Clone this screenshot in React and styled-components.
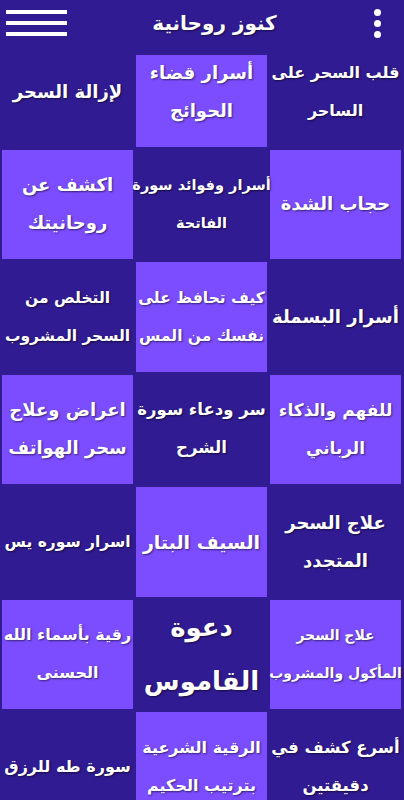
import { useLayoutEffect, useRef } from "react";
import styled, { createGlobalStyle } from "styled-components";

const items = [
  { lines: ["قلب السحر على", "الساحر"], size: 16 },
  { lines: ["أسرار قضاء", "الحوائج"] },
  { lines: ["لإزالة السحر"] },
  { lines: ["حجاب الشدة"] },
  { lines: ["أسرار وفوائد سورة", "الفاتحة"], size: 14.5 },
  { lines: ["اكشف عن", "روحانيتك"] },
  { lines: ["أسرار البسملة"] },
  { lines: ["كيف تحافظ على", "نفسك من المس"], size: 15.5 },
  { lines: ["التخلص من", "السحر المشروب"], size: 15.5 },
  { lines: ["للفهم والذكاء", "الرباني"], size: 17 },
  { lines: ["سر ودعاء سورة", "الشرح"], size: 16.5 },
  { lines: ["اعراض وعلاج", "سحر الهواتف"] },
  { lines: ["علاج السحر", "المتجدد"] },
  { lines: ["السيف البتار"], size: 19 },
  { lines: ["اسرار سوره يس"], size: 15.5 },
  { lines: ["علاج السحر", "المأكول والمشروب"], size: 14 },
  { lines: ["دعوة", "القاموس"], size: 26 },
  { lines: ["رقية بأسماء الله", "الحسنى"], size: 16 },
  { lines: ["أسرع كشف في", "دقيقتين"], size: 16.5 },
  { lines: ["الرقية الشرعية", "بترتيب الحكيم"], size: 16 },
  { lines: ["سورة طه للرزق"], size: 16 },
];

export default function App() {
  const listRef = useRef(null);

  useLayoutEffect(() => {
    if (listRef.current) listRef.current.scrollTop = 18;
  }, []);

  return (
    <Main>
      <GlobalStyle />
      <Toolbar>
        <Menu>
          <span />
          <span />
          <span />
        </Menu>
        <Title>كنوز روحانية</Title>
        <Dots>
          <i />
          <i />
          <i />
        </Dots>
      </Toolbar>
      <List ref={listRef}>
        <Grid>
          {items.map((item, i) => {
            const row = Math.floor(i / 3);
            const col = i % 3;
            return (
              <Card key={i} $light={(row + col) % 2 === 1} $size={item.size}>
                {item.lines.map((line) => (
                  <Line key={line}>{line}</Line>
                ))}
              </Card>
            );
          })}
        </Grid>
      </List>
    </Main>
  );
}

const GlobalStyle = createGlobalStyle`
  html, body {
    margin: 0;
    padding: 0;
    background: #311b92;
    overflow: hidden;
  }
`;

const Main = styled.div`
  width: 404px;
  height: 800px;
  display: flex;
  flex-direction: column;
  background-color: #311b92;
  font-family: "DejaVu Sans", sans-serif;
  overflow: hidden;
`;

const Toolbar = styled.div`
  height: 55px;
  flex-shrink: 0;
  box-sizing: border-box;
  padding: 0 0 9px 6px;
  display: flex;
  align-items: center;
  justify-content: space-between;
  background-color: #311b92;
  color: #ffffff;
`;

const Menu = styled.div`
  width: 61px;
  display: flex;
  flex-direction: column;
  gap: 7px;
  span {
    display: block;
    height: 4px;
    background: #ffffff;
  }
`;

const Title = styled.h1`
  margin: 0 0 0 10px;
  font-size: 20px;
  font-weight: bold;
  direction: rtl;
  text-shadow: 1px 1px 2px rgba(0, 0, 0, 0.5);
`;

const Dots = styled.div`
  width: 52px;
  display: flex;
  flex-direction: column;
  align-items: center;
  gap: 4px;
  i {
    display: block;
    width: 7px;
    height: 7px;
    border-radius: 50%;
    background: #ffffff;
  }
`;

const List = styled.div`
  flex: 1;
  overflow-y: auto;
  scrollbar-width: none;
  &::-webkit-scrollbar {
    display: none;
  }
`;

const Grid = styled.div`
  direction: rtl;
  display: grid;
  grid-template-columns: repeat(3, 1fr);
  grid-auto-rows: 109.5px;
  gap: 3px;
  padding: 0 3px 40px 2px;
`;

const Card = styled.div`
  display: flex;
  flex-direction: column;
  align-items: center;
  justify-content: center;
  min-width: 0;
  text-align: center;
  background-color: ${(p) => (p.$light ? "#7c4dff" : "#311b92")};
  color: #ffffff;
  font-size: ${(p) => p.$size || 18}px;
  font-weight: bold;
  line-height: ${(p) => (p.$size > 22 ? "54px" : "38px")};
  text-shadow: 1px 1px 2px rgba(0, 0, 0, 0.55);
`;

const Line = styled.span`
  display: block;
  white-space: nowrap;
`;
